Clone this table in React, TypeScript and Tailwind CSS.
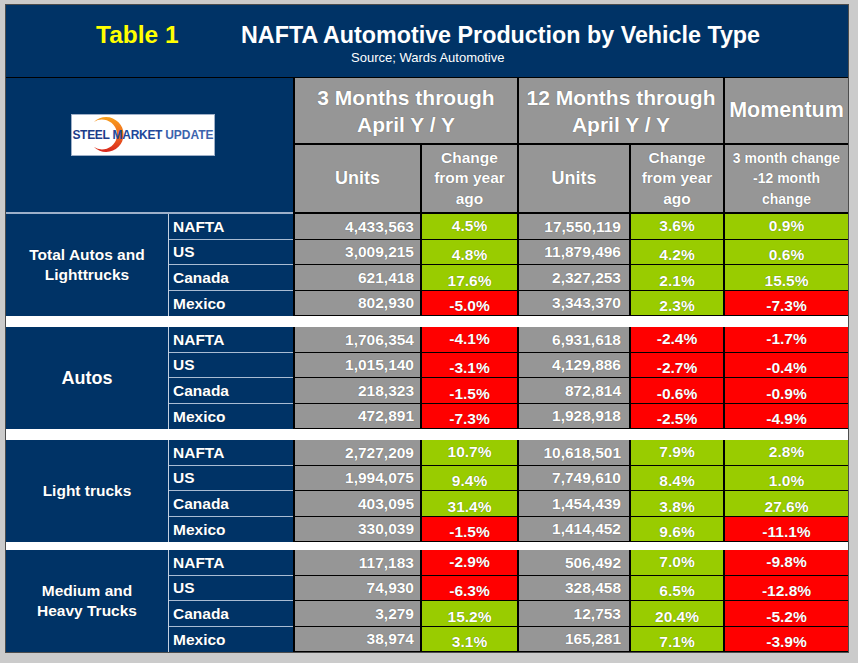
import React from 'react';

type Row = { country: string; u3: string; c3: string; u12: string; c12: string; mom: string };
type Group = { label: string[]; big?: boolean; rows: Row[] };

const groups: Group[] = [
  {
    label: ['Total Autos and', 'Lighttrucks'],
    rows: [
      { country: 'NAFTA', u3: '4,433,563', c3: '4.5%', u12: '17,550,119', c12: '3.6%', mom: '0.9%' },
      { country: 'US', u3: '3,009,215', c3: '4.8%', u12: '11,879,496', c12: '4.2%', mom: '0.6%' },
      { country: 'Canada', u3: '621,418', c3: '17.6%', u12: '2,327,253', c12: '2.1%', mom: '15.5%' },
      { country: 'Mexico', u3: '802,930', c3: '-5.0%', u12: '3,343,370', c12: '2.3%', mom: '-7.3%' }
    ]
  },
  {
    label: ['Autos'],
    big: true,
    rows: [
      { country: 'NAFTA', u3: '1,706,354', c3: '-4.1%', u12: '6,931,618', c12: '-2.4%', mom: '-1.7%' },
      { country: 'US', u3: '1,015,140', c3: '-3.1%', u12: '4,129,886', c12: '-2.7%', mom: '-0.4%' },
      { country: 'Canada', u3: '218,323', c3: '-1.5%', u12: '872,814', c12: '-0.6%', mom: '-0.9%' },
      { country: 'Mexico', u3: '472,891', c3: '-7.3%', u12: '1,928,918', c12: '-2.5%', mom: '-4.9%' }
    ]
  },
  {
    label: ['Light trucks'],
    rows: [
      { country: 'NAFTA', u3: '2,727,209', c3: '10.7%', u12: '10,618,501', c12: '7.9%', mom: '2.8%' },
      { country: 'US', u3: '1,994,075', c3: '9.4%', u12: '7,749,610', c12: '8.4%', mom: '1.0%' },
      { country: 'Canada', u3: '403,095', c3: '31.4%', u12: '1,454,439', c12: '3.8%', mom: '27.6%' },
      { country: 'Mexico', u3: '330,039', c3: '-1.5%', u12: '1,414,452', c12: '9.6%', mom: '-11.1%' }
    ]
  },
  {
    label: ['Medium and', 'Heavy Trucks'],
    rows: [
      { country: 'NAFTA', u3: '117,183', c3: '-2.9%', u12: '506,492', c12: '7.0%', mom: '-9.8%' },
      { country: 'US', u3: '74,930', c3: '-6.3%', u12: '328,458', c12: '6.5%', mom: '-12.8%' },
      { country: 'Canada', u3: '3,279', c3: '15.2%', u12: '12,753', c12: '20.4%', mom: '-5.2%' },
      { country: 'Mexico', u3: '38,974', c3: '3.1%', u12: '165,281', c12: '7.1%', mom: '-3.9%' }
    ]
  }
];

const Logo = () => (
  <div className="relative w-[144px] h-[42px] bg-white border border-[#9fb0c8]">
    <svg className="absolute left-0 top-0" width="142" height="40" viewBox="0 0 142 40">
      <defs>
        <linearGradient id="smu-arc" x1="0" y1="0" x2="0" y2="1">
          <stop offset="0" stopColor="#f8a01c" />
          <stop offset="0.5" stopColor="#f06a1f" />
          <stop offset="1" stopColor="#d8261d" />
        </linearGradient>
      </defs>
      <path d="M21.9 6.9 A17.5 17.5 0 1 1 21.9 32.1 A15 15 0 1 0 21.9 6.9 Z" fill="url(#smu-arc)" />
    </svg>
    <div className="relative flex h-full items-center justify-center text-[12px] leading-none">
      <span className="font-bold tracking-[-0.3px] text-[#1c3c8a]">STEEL</span>
      <span className="ml-[3px] font-bold tracking-[-0.3px] text-[#21479a]">MARKET</span>
      <span className="ml-[3px] text-[#3d64ad]">UPDATE</span>
    </div>
  </div>
);

const Pct = ({ v, first }: { v: string; first: boolean }) => (
  <div
    className={`${v.startsWith('-') ? 'bg-[#ff0000]' : 'bg-[#99cc00]'} flex justify-center border-l-2 border-b border-black leading-[18px] ${
      first ? 'items-center' : 'items-end'
    }`}
  >
    {v}
  </div>
);

export default function App() {
  return (
    <div className="min-h-screen bg-[#cbcbcb] pt-[4px] pl-[5px] font-['Liberation_Sans',Arial,sans-serif]">
      <div className="w-[844px] border border-[#4d4d4d] bg-white">
        {/* title band */}
        <div className="h-[73px] border-b border-black bg-[#003366]">
          <div className="flex items-baseline pl-[90px] pt-[16px] leading-[28px]">
            <span className="w-[145px] text-[24.5px] font-bold text-[#ffff00]">Table 1</span>
            <span className="text-[23.3px] font-bold text-white">NAFTA Automotive Production by Vehicle Type</span>
          </div>
          <div className="mt-[1px] pl-[345px] text-[13px] leading-[16px] text-white">Source; Wards Automotive</div>
        </div>

        {/* column headers */}
        <div className="grid grid-cols-[163px_124px_127px_97px_112px_94px_125px] grid-rows-[67px_69px] bg-[#969696] font-bold text-white [text-shadow:0_0_1px_rgba(0,0,0,0.45)]">
          <div className="col-span-2 row-span-2 border-b-2 border-[#9db0c9] bg-[#003366] pl-[65px] pt-[36px] [text-shadow:none]">
            <Logo />
          </div>
          <div className="col-span-2 flex items-center justify-center border-l-2 border-b-2 border-black text-center text-[21px] leading-[27px]">
            3 Months through
            <br />
            April Y / Y
          </div>
          <div className="col-span-2 flex items-center justify-center border-l-2 border-b-2 border-black text-center text-[21px] leading-[27px]">
            12 Months through
            <br />
            April Y / Y
          </div>
          <div className="flex items-center justify-center border-l-2 border-b-2 border-black text-[21.5px]">Momentum</div>
          <div className="flex items-center justify-center border-l-2 border-b-2 border-black text-[18px]">Units</div>
          <div className="flex items-center justify-center border-l-2 border-b-2 border-black text-center text-[15.5px] leading-[20.5px]">
            Change
            <br />
            from year
            <br />
            ago
          </div>
          <div className="flex items-center justify-center border-l-2 border-b-2 border-black text-[18px]">Units</div>
          <div className="flex items-center justify-center border-l-2 border-b-2 border-black text-center text-[15.5px] leading-[20.5px]">
            Change
            <br />
            from year
            <br />
            ago
          </div>
          <div className="flex items-center justify-center border-l-2 border-b-2 border-black text-center text-[14px] leading-[20.5px]">
            3 month change
            <br />
            -12 month
            <br />
            change
          </div>
        </div>

        {/* data groups */}
        {groups.map((g, gi) => (
          <React.Fragment key={gi}>
            {gi > 0 && <div className={gi === 3 ? 'h-[8px] bg-white' : 'h-[11px] bg-white'} />}
            <div className="grid h-[102px] grid-cols-[163px_124px_127px_97px_112px_94px_125px] grid-rows-4 text-[15.5px] font-bold text-white [text-shadow:0_0_1px_rgba(0,0,0,0.45)]">
              <div
                className={`row-span-4 flex flex-col items-center justify-center border-r border-[#c3d0e0] bg-[#003366] text-center ${
                  g.big ? 'text-[18px]' : 'leading-[20px]'
                }`}
              >
                {g.label.map((l) => (
                  <span key={l}>{l}</span>
                ))}
              </div>
              {g.rows.map((r, ri) => (
                <React.Fragment key={ri}>
                  <div className={`flex items-center bg-[#003366] pl-[4px] ${ri < 3 ? 'border-b border-[#a9bcd3]' : ''}`}>
                    {r.country}
                  </div>
                  <div className="flex items-center justify-end border-l-2 border-b border-black bg-[#969696] pr-[6px]">{r.u3}</div>
                  <Pct v={r.c3} first={ri === 0} />
                  <div className="flex items-center justify-end border-l-2 border-b border-black bg-[#969696] pr-[8px]">{r.u12}</div>
                  <Pct v={r.c12} first={ri === 0} />
                  <Pct v={r.mom} first={ri === 0} />
                </React.Fragment>
              ))}
            </div>
          </React.Fragment>
        ))}
      </div>
    </div>
  );
}
